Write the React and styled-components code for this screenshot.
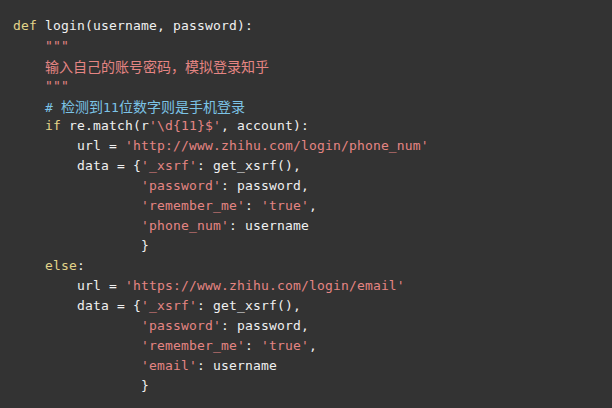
import React from 'react';
import styled, {createGlobalStyle} from 'styled-components';

const Global = createGlobalStyle`
    html, body {
        margin: 0;
        padding: 0;
        background: #333333;
    }
`

// token kinds: k = keyword, s = string, c = comment, p = plain; third item is chinese text
const lines = [
    [0, [['k', 'def'], ['p', ' login(username, password):']]],
    [1, [['s', '"""']]],
    [1, [['s', '', '输入自己的账号密码，模拟登录知乎']]],
    [1, [['s', '"""']]],
    [1, [['c', '# ', '检测到'], ['c', '11', '位数字则是手机登录']]],
    [1, [['k', 'if'], ['p', ' re.match(r'], ['s', "'\\d{11}$'"], ['p', ', account):']]],
    [2, [['p', 'url = '], ['s', "'http://www.zhihu.com/login/phone_num'"]]],
    [2, [['p', 'data = {'], ['s', "'_xsrf'"], ['p', ': get_xsrf(),']]],
    [4, [['s', "'password'"], ['p', ': password,']]],
    [4, [['s', "'remember_me'"], ['p', ': '], ['s', "'true'"], ['p', ',']]],
    [4, [['s', "'phone_num'"], ['p', ': username']]],
    [4, [['p', '}']]],
    [1, [['k', 'else'], ['p', ':']]],
    [2, [['p', 'url = '], ['s', "'https://www.zhihu.com/login/email'"]]],
    [2, [['p', 'data = {'], ['s', "'_xsrf'"], ['p', ': get_xsrf(),']]],
    [4, [['s', "'password'"], ['p', ': password,']]],
    [4, [['s', "'remember_me'"], ['p', ': '], ['s', "'true'"], ['p', ',']]],
    [4, [['s', "'email'"], ['p', ': username']]],
    [4, [['p', '}']]],
]

const App = () => {
  return (
    <>
      <Global />
      <CodeBlock>
        {lines.map(([indent, tokens], i) => (
          <Line key={i} $indent={indent}>
            {tokens.map(([kind, text, cjk], j) => (
              <Token key={j} $kind={kind}>
                {text}
                {cjk && <Cjk>{cjk}</Cjk>}
              </Token>
            ))}
          </Line>
        ))}
      </CodeBlock>
    </>
  )
}

const colors = {
    k: '#e3d48a',
    s: '#e58583',
    c: '#7cc3e6',
    p: '#f0f0f0',
}

const CodeBlock = styled.pre`
    margin: 0;
    width: 612px;
    height: 408px;
    box-sizing: border-box;
    padding: 16px 13px;
    background: #333333;
    font-family: "DejaVu Sans Mono", "Noto Sans CJK SC", monospace;
    font-size: 13px;
    letter-spacing: 0.17px;
    line-height: 20px;
    overflow: hidden;
`

const Line = styled.div`
    height: 20px;
    white-space: pre;
    padding-left: ${p => p.$indent * 32}px;
`

const Token = styled.span`
    color: ${p => colors[p.$kind]};
`

const Cjk = styled.span`
    font-family: "Noto Sans CJK SC", sans-serif;
    font-size: 14px;
    letter-spacing: 0;
`

export default App
